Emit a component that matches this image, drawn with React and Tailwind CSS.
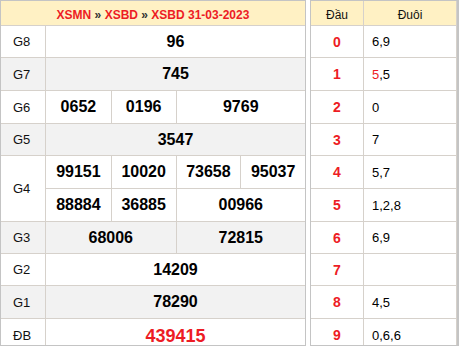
import React from "react";

const tail = [
  ["6,9"],
  ["5", ",5"],
  ["0"],
  ["7"],
  ["5,7"],
  ["1,2,8"],
  ["6,9"],
  [""],
  ["4,5"],
  ["0,6,6"],
];

const rightH = ["h-[32px]", "h-[33px]", "h-[33px]", "h-[32px]", "h-[33px]", "h-[33px]", "h-[32px]", "h-[32px]", "h-[33px]", "h-[26px]"];

function Label({ children, last }) {
  return (
    <div className={"w-[45px] shrink-0 border-r border-[#d6d1cb] flex items-center pl-[12px] text-[13px] text-[#111] " + (last ? "pt-[6px]" : "")}>
      {children}
    </div>
  );
}

function Num({ children, span2, first }) {
  return (
    <div className={"flex items-center justify-center text-[16px] font-bold text-black " + (span2 ? "col-span-2 " : "") + (first ? "" : "border-l border-[#d6d1cb]")}>
      {children}
    </div>
  );
}

export default function App() {
  return (
    <div className="w-[461px] h-[346px] bg-white flex font-['Liberation_Sans',Arial,sans-serif] leading-none">
      {/* Left table */}
      <div className="w-[306px] h-[346px] border border-[#c4c4c4] flex flex-col">
        <div className="h-[25px] shrink-0 border-b border-[#d6d1cb] bg-[#fff1c4] flex items-center justify-center pt-[4px] text-[12px] font-bold text-[#ed1c24]">
          <span>
            XSMN <span className="text-[#333]">»</span> XSBD <span className="text-[#333]">»</span> XSBD 31-03-2023
          </span>
        </div>
        <div className="h-[32px] shrink-0 flex border-b border-[#d6d1cb]">
          <Label>G8</Label>
          <div className="flex-1 grid grid-cols-1"><Num first>96</Num></div>
        </div>
        <div className="h-[33px] shrink-0 flex border-b border-[#d6d1cb] bg-[#f2f2f2]">
          <Label>G7</Label>
          <div className="flex-1 grid grid-cols-1"><Num first>745</Num></div>
        </div>
        <div className="h-[33px] shrink-0 flex border-b border-[#d6d1cb]">
          <Label>G6</Label>
          <div className="flex-1 grid grid-cols-4">
            <Num first>0652</Num>
            <Num>0196</Num>
            <Num span2>9769</Num>
          </div>
        </div>
        <div className="h-[32px] shrink-0 flex border-b border-[#d6d1cb] bg-[#f2f2f2]">
          <Label>G5</Label>
          <div className="flex-1 grid grid-cols-1"><Num first>3547</Num></div>
        </div>
        <div className="h-[66px] shrink-0 flex border-b border-[#d6d1cb]">
          <Label>G4</Label>
          <div className="flex-1 flex flex-col">
            <div className="h-[33px] grid grid-cols-4 border-b border-[#d6d1cb]">
              <Num first>99151</Num>
              <Num>10020</Num>
              <Num>73658</Num>
              <Num>95037</Num>
            </div>
            <div className="flex-1 grid grid-cols-4">
              <Num first>88884</Num>
              <Num>36885</Num>
              <Num span2>00966</Num>
            </div>
          </div>
        </div>
        <div className="h-[32px] shrink-0 flex border-b border-[#d6d1cb] bg-[#f2f2f2]">
          <Label>G3</Label>
          <div className="flex-1 grid grid-cols-4">
            <Num first span2>68006</Num>
            <Num span2>72815</Num>
          </div>
        </div>
        <div className="h-[32px] shrink-0 flex border-b border-[#d6d1cb]">
          <Label>G2</Label>
          <div className="flex-1 grid grid-cols-1"><Num first>14209</Num></div>
        </div>
        <div className="h-[33px] shrink-0 flex border-b border-[#d6d1cb] bg-[#f2f2f2]">
          <Label>G1</Label>
          <div className="flex-1 grid grid-cols-1"><Num first>78290</Num></div>
        </div>
        <div className="flex-1 flex">
          <Label last>ĐB</Label>
          <div className="flex-1 flex items-center justify-center pt-[7px] text-[18px] font-bold text-[#ed1c24]">439415</div>
        </div>
      </div>

      {/* Right table */}
      <div className="ml-[4px] w-[149px] h-[346px] border-l border-t border-b border-r-2 border-[#c4c4c4] flex flex-col">
        <div className="h-[25px] shrink-0 flex border-b border-[#d6d1cb] bg-[#fff1c4] text-[12px] text-[#111]">
          <div className="w-[53px] border-r border-[#d6d1cb] flex items-center justify-center pt-[4px]">Đầu</div>
          <div className="flex-1 border-r border-[#d6d1cb] flex items-center justify-center pt-[4px]">Đuôi</div>
        </div>
        {tail.map((t, i) => (
          <div key={i} className={rightH[i] + " shrink-0 flex " + (i < 9 ? "border-b border-[#d6d1cb]" : "")}>
            <div className={"w-[53px] border-r border-[#d6d1cb] flex items-center justify-center text-[14px] font-bold text-[#ed1c24] " + (i === 9 ? "pt-[6px]" : "")}>
              {i}
            </div>
            <div className={"flex-1 border-r border-[#d6d1cb] flex items-center pl-[8px] text-[13px] text-black " + (i === 9 ? "pt-[6px]" : "")}>
              {t.length === 2 ? (
                <span>
                  <span className="text-[#ed1c24]">{t[0]}</span>
                  {t[1]}
                </span>
              ) : (
                <span>{t[0]}</span>
              )}
            </div>
          </div>
        ))}
      </div>
    </div>
  );
}
